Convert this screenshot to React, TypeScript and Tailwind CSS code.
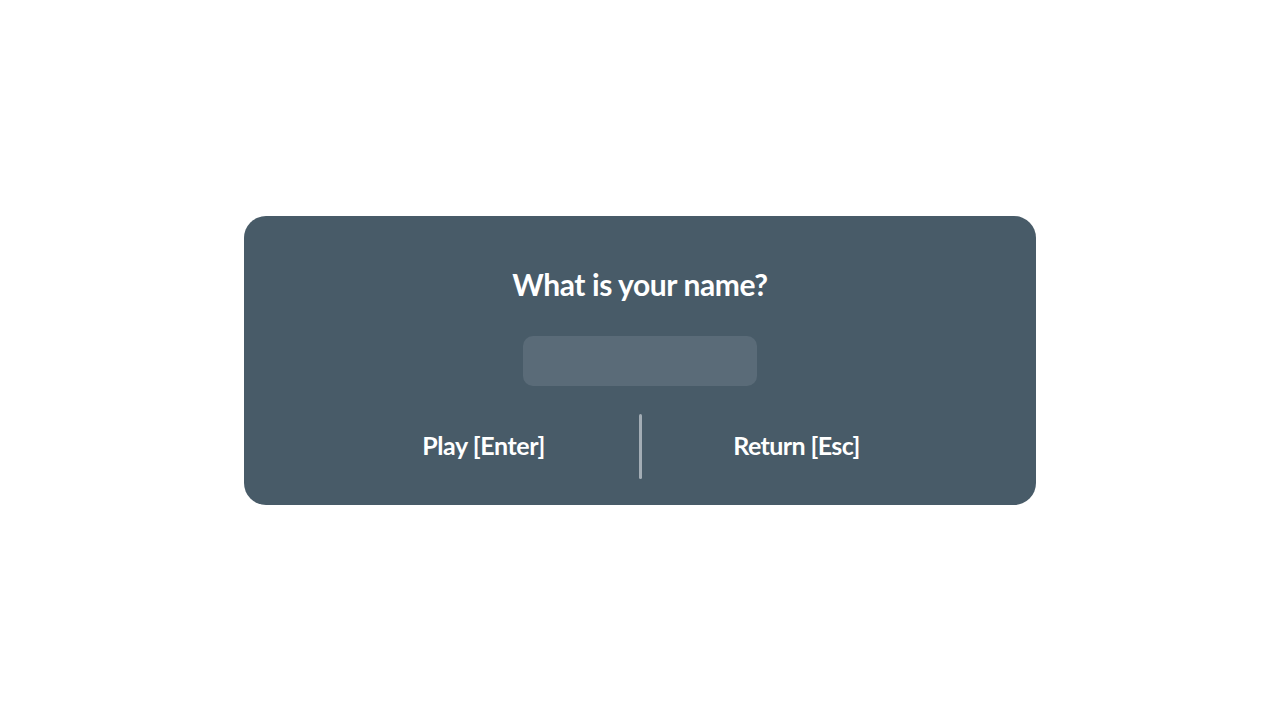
import React from "react";

const NamePrompt = () => {
    return (
        <div className="w-[792px] h-[289px] rounded-[22px] bg-[#485b68] flex flex-col items-center pt-[50px] text-white font-['Lato','Liberation_Sans',sans-serif]">
            <h2 className="text-[30px] leading-[36px] font-bold tracking-[-0.4px]">What is your name?</h2>
            <input
                type="text"
                className="mt-[34px] w-[234px] h-[50px] rounded-[10px] bg-[#5a6b78] outline-none px-3 text-lg text-white"
            />
            <div className="mt-[28px] flex items-stretch h-[65px]">
                <button className="w-[310px] text-[25px] font-bold tracking-[-0.4px]">Play [Enter]</button>
                <div className="w-[3px] rounded-full bg-[#a3adb5]" />
                <button className="w-[310px] text-[25px] font-bold tracking-[-0.6px]">Return [Esc]</button>
            </div>
        </div>
    );
};

export default function App() {
    return (
        <div className="w-full h-screen bg-white flex items-center justify-center">
            <NamePrompt />
        </div>
    );
}
